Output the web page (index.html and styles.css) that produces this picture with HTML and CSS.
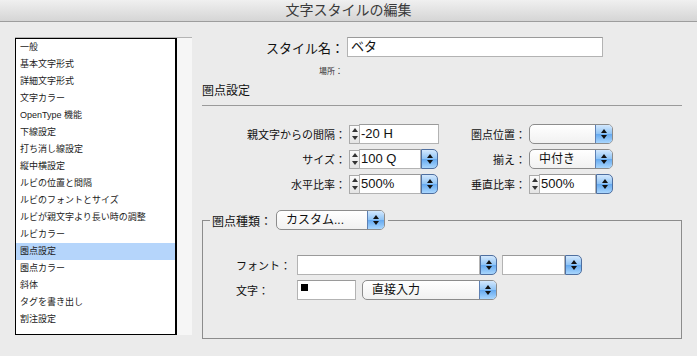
FILE: index.html
```html
<!DOCTYPE html>
<html lang="ja">
<head>
    <meta charset="UTF-8">
    <meta name="viewport" content="width=device-width, initial-scale=1.0">
    <title>文字スタイルの編集</title>
    <link rel="stylesheet" href="styles.css">
</head>
<body>

<header class="titlebar">文字スタイルの編集</header>

<main class="dialog">
    <!-- カテゴリ一覧 -->
    <aside class="sidebar">
        <ul class="cat-list">
            <li>一般</li>
            <li>基本文字形式</li>
            <li>詳細文字形式</li>
            <li>文字カラー</li>
            <li>OpenType 機能</li>
            <li>下線設定</li>
            <li>打ち消し線設定</li>
            <li>縦中横設定</li>
            <li>ルビの位置と間隔</li>
            <li>ルビのフォントとサイズ</li>
            <li>ルビが親文字より長い時の調整</li>
            <li>ルビカラー</li>
            <li class="selected">圏点設定</li>
            <li>圏点カラー</li>
            <li>斜体</li>
            <li>タグを書き出し</li>
            <li>割注設定</li>
        </ul>
    </aside>

    <section class="panel">
        <div class="name-row">
            <span class="name-label">スタイル名：</span>
            <div class="field name-field">ベタ</div>
        </div>
        <div class="location">場所：</div>
        <h2 class="section-title">圏点設定</h2>

        <!-- 数値設定 -->
        <div class="settings-grid">
            <span class="label">親文字からの間隔：</span>
            <div class="ctrl">
                <span class="spinner"></span>
                <div class="field num-field wide">-20 H</div>
            </div>
            <span class="label">圏点位置：</span>
            <div class="popup pos-popup"><span class="popup-value"></span><span class="arrows"></span></div>

            <span class="label">サイズ：</span>
            <div class="ctrl">
                <span class="spinner"></span>
                <div class="field num-field">100 Q</div>
                <span class="arrows combo-arrows"></span>
            </div>
            <span class="label">揃え：</span>
            <div class="popup pos-popup"><span class="popup-value">中付き</span><span class="arrows"></span></div>

            <span class="label">水平比率：</span>
            <div class="ctrl">
                <span class="spinner"></span>
                <div class="field num-field">500%</div>
                <span class="arrows combo-arrows"></span>
            </div>
            <span class="label">垂直比率：</span>
            <div class="ctrl">
                <span class="spinner"></span>
                <div class="field num-field small">500%</div>
                <span class="arrows combo-arrows"></span>
            </div>
        </div>

        <!-- 圏点種類 -->
        <fieldset class="kenten-group">
            <legend>
                <span class="legend-label">圏点種類：</span>
                <span class="popup type-popup"><span class="popup-value">カスタム...</span><span class="arrows"></span></span>
            </legend>
            <div class="group-row">
                <span class="group-label">フォント：</span>
                <div class="ctrl">
                    <div class="field font-field"></div>
                    <span class="arrows combo-arrows"></span>
                </div>
                <div class="ctrl style-combo">
                    <div class="field style-field"></div>
                    <span class="arrows combo-arrows"></span>
                </div>
            </div>
            <div class="group-row">
                <span class="group-label">文字：</span>
                <div class="field char-field"><span class="swatch"></span></div>
                <div class="popup input-popup"><span class="popup-value">直接入力</span><span class="arrows"></span></div>
            </div>
        </fieldset>
    </section>
</main>

</body>
</html>
```

FILE: styles.css
```css
body {
    margin: 0;
    background: #ebebeb;
    font-family: "Liberation Sans", "Noto Sans CJK JP", sans-serif;
    color: #111;
}
.titlebar {
    height: 21px;
    line-height: 21px;
    text-align: center;
    font-size: 14px;
    color: #3a3a3a;
    background: linear-gradient(#f0f0f0, #d5d5d5);
    border-bottom: 1px solid #9d9d9d;
}
.dialog {
    display: flex;
    padding: 15px 0 0 15px;
}

/* 左のリスト */
.sidebar {
    width: 177px;
    height: 298px;
    background: #f6f6f6;
    border-top: 1px solid #b4b4b4;
    box-sizing: border-box;
}
.cat-list {
    list-style: none;
    margin: 0;
    padding: 0;
    width: 162px;
    height: 297px;
    box-sizing: border-box;
    background: #fff;
    border: 1px solid #000;
    border-right-width: 2px;
}
.cat-list li {
    height: 17px;
    line-height: 17px;
    padding-left: 4px;
    font-size: 9px;
    color: #222;
}
.cat-list li.selected {
    background: #b5d5fb;
}

/* 右のパネル */
.panel {
    margin-left: 10px;
    width: 480px;
}
.name-row {
    display: flex;
    align-items: center;
}
.name-label {
    width: 142px;
    text-align: right;
    padding-right: 3px;
    font-size: 13px;
}
.field {
    box-sizing: border-box;
    height: 20px;
    line-height: 18px;
    background: #fff;
    border: 1px solid #b3b3b3;
    border-top-color: #9a9a9a;
    padding-left: 3px;
    font-size: 13px;
}
.name-field {
    width: 256px;
}
.location {
    margin-top: 9px;
    width: 141px;
    text-align: right;
    font-size: 8px;
    line-height: 12px;
    color: #333;
}
.section-title {
    margin: 5px 0 0;
    padding-bottom: 6px;
    font-size: 12px;
    line-height: 16px;
    font-weight: normal;
    border-bottom: 1px solid #9a9a9a;
}

.settings-grid {
    display: grid;
    grid-template-columns: 147px 91px 89px 84px;
    grid-auto-rows: 20px;
    row-gap: 5px;
    margin-top: 18px;
    align-items: center;
}
.label {
    text-align: right;
    padding-right: 3px;
    font-size: 11px;
}
.ctrl {
    display: flex;
    align-items: center;
}
.num-field {
    width: 62px;
    padding-left: 1px;
}
.num-field.wide {
    width: 80px;
}
.num-field.small {
    width: 57px;
}

/* 上下ボタン */
.spinner {
    box-sizing: border-box;
    width: 10px;
    height: 19px;
    border: 1px solid #a9a9a9;
    border-right: none;
    background: linear-gradient(#fafafa, #e4e4e4);
    display: flex;
    flex-direction: column;
    align-items: center;
    justify-content: space-around;
}
.spinner::before,
.spinner::after {
    content: "";
    border-left: 3px solid transparent;
    border-right: 3px solid transparent;
}
.spinner::before {
    border-bottom: 4px solid #333;
}
.spinner::after {
    border-top: 4px solid #333;
}

/* ポップアップ */
.popup {
    display: flex;
    box-sizing: border-box;
    height: 20px;
    border: 1px solid #8c8c8c;
    border-radius: 5px;
    background: linear-gradient(#ffffff, #f1f1f1);
    overflow: hidden;
}
.popup-value {
    flex: 1;
    padding-left: 9px;
    font-size: 12px;
    line-height: 18px;
}
.arrows {
    box-sizing: border-box;
    width: 17px;
    display: flex;
    flex-direction: column;
    align-items: center;
    justify-content: center;
    gap: 2px;
    background: linear-gradient(#d3e8fd, #8ec3f5 50%, #66aaf0 52%, #a9d6fd);
    border-left: 1px solid #5d80b3;
}
.arrows::before,
.arrows::after {
    content: "";
    border-left: 3px solid transparent;
    border-right: 3px solid transparent;
}
.arrows::before {
    border-bottom: 4px solid #111;
}
.arrows::after {
    border-top: 4px solid #111;
}
.combo-arrows {
    height: 20px;
    border: 1px solid #4f6f9f;
    border-radius: 0 5px 5px 0;
}
.pos-popup {
    width: 84px;
}

/* 圏点種類グループ */
.kenten-group {
    margin: 16px 0 0;
    padding: 25px 0 33px 0;
    border: 1px solid #8c8c8c;
    min-inline-size: 0;
}
.kenten-group legend {
    display: flex;
    align-items: center;
    margin-left: 7px;
    padding: 0 3px 0 2px;
}
.legend-label {
    font-size: 12px;
    width: 64px;
}
.type-popup {
    width: 109px;
}
.group-row {
    display: flex;
    align-items: center;
    height: 20px;
    margin-bottom: 5px;
    padding-left: 33px;
}
.group-label {
    width: 61px;
    font-size: 11px;
}
.font-field {
    width: 183px;
}
.style-combo {
    margin-left: 5px;
}
.style-field {
    width: 63px;
}
.char-field {
    width: 59px;
    padding: 3px 0 0 3px;
}
.swatch {
    display: block;
    width: 7px;
    height: 7px;
    background: #000;
}
.input-popup {
    width: 135px;
    margin-left: 6px;
}
```
